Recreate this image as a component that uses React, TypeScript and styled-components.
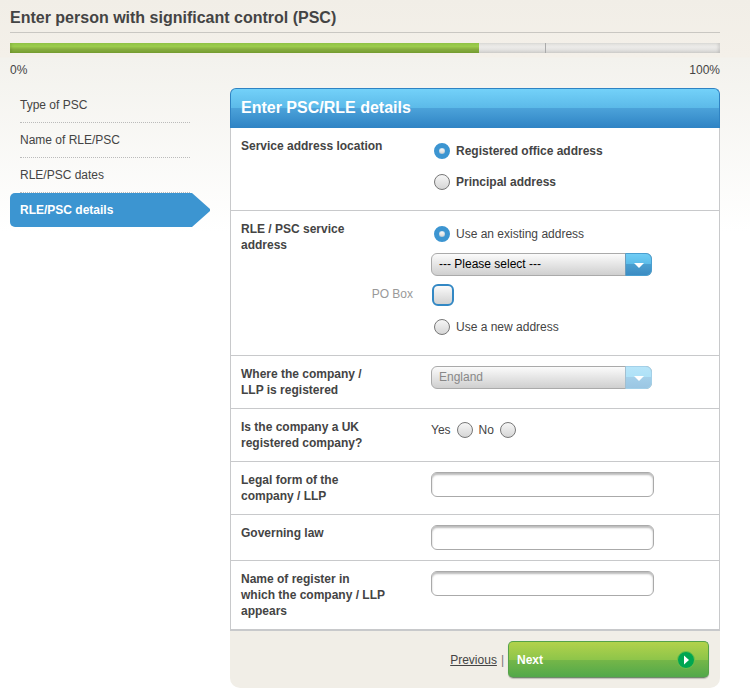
import React, { useState } from 'react';
import styled, { createGlobalStyle, css } from 'styled-components';

const Global = createGlobalStyle`
  *, *::before, *::after { box-sizing: border-box; }
  body {
    margin: 0;
    color: #444;
    font: 12px/16px "Liberation Sans", Arial, sans-serif;
    background: #fff linear-gradient(#f1eee7 0, #f4f0e9 57px, #f3f2ed 58px, #fff 232px) no-repeat;
  }
  ul, h1, h2 { margin: 0; padding: 0; }
  input, select, button { margin: 0; font: inherit; }
`;

const Page = styled.div`
  padding: 8px 30px 3px 10px;
`;

const Title = styled.h1`
  padding-bottom: 4px;
  border-bottom: 1px solid #c9c7c2;
  font-size: 16px;
  line-height: 20px;
`;

const Track = styled.div`
  position: relative;
  height: 10px;
  margin: 10px 0 9px;
  background: linear-gradient(#e3e2df, #ecebe9 40%, #e6e5e3 60%, #d5d4d1);
  box-shadow: inset -2px 0 3px rgba(0, 0, 0, 0.1);
`;

const Fill = styled.div`
  height: 100%;
  background: linear-gradient(#93c647, #9ccb4c 35%, #85ab3e 65%, #77a030);
  box-shadow: inset 2px 0 2px rgba(0, 0, 0, 0.08);
`;

const Marker = styled.span`
  position: absolute;
  top: 0;
  width: 1px;
  height: 100%;
  background: #aaa;
`;

const Scale = styled.div`
  display: flex;
  justify-content: space-between;
  margin-bottom: 10px;
`;

const Columns = styled.div`
  display: grid;
  grid-template-columns: 200px minmax(0, 1fr);
  gap: 20px;
  align-items: start;
`;

const Steps = styled.ul`
  list-style: none;
`;

const StepLink = styled.a<{ $active?: boolean }>`
  display: block;
  color: #444;
  text-decoration: none;
  ${({ $active }) =>
    $active
      ? css`
          padding: 9px 10px;
          border-radius: 5px 0 0 5px;
          color: #fff;
          font-weight: bold;
          background: #3c95d1;
          clip-path: polygon(0 0, 182px 0, 200px 16px, 200px 18px, 182px 100%, 0 100%);
        `
      : css`
          margin: 0 20px 0 10px;
          padding: 9px 0;
          border-bottom: 1px dotted #bbb;
        `}
`;

const PanelHeader = styled.h2`
  padding: 9px 10px 10px;
  border: 1px solid #2f83c3;
  border-bottom: 0;
  border-radius: 6px 6px 0 0;
  color: #fff;
  font-size: 16px;
  line-height: 20px;
  background: linear-gradient(#73d1f9, #5bb9e8 50%, #4ba2d9 50%, #2f83c4);
`;

const Panel = styled.div`
  border: 1px solid #c8c9cb;
  border-top: 0;
  background: #fff;
`;

const Row = styled.div<{ $roomy?: boolean }>`
  display: grid;
  grid-template-columns: 190px minmax(0, 1fr);
  align-items: start;
  padding: 10px 10px ${({ $roomy }) => ($roomy ? 15 : 10)}px;
  border-bottom: 1px solid #c8c9cb;
`;

const Caption = styled.label`
  max-width: 146px;
  font-weight: bold;
`;

const Stack = styled.div<{ $gap: number }>`
  display: grid;
  gap: ${({ $gap }) => $gap}px;
`;

const Choice = styled.label<{ $bold?: boolean }>`
  display: flex;
  align-items: center;
  gap: 6px;
  height: 26px;
  padding-left: 3px;
  font-weight: ${({ $bold }) => ($bold ? 'bold' : 'normal')};
`;

const Radio = styled.input.attrs({ type: 'radio' })`
  appearance: none;
  flex: none;
  width: 16px;
  height: 16px;
  border: 1px solid #777;
  border-radius: 50%;
  background: linear-gradient(#f6f6f6, #d6d6d6);
  &:checked {
    border: 5px solid #3c95d1;
    background: linear-gradient(#fff, #d3d3d3) padding-box;
    box-shadow: inset 0 0 1px #2f80bd;
  }
`;

const InlineChoices = styled.div`
  display: flex;
  gap: 6px;
  height: 22px;
`;

const InlineChoice = styled.label`
  display: flex;
  align-items: center;
  gap: 6px;
`;

const SelectBox = styled.div`
  position: relative;
  width: 100%;
  max-width: 221px;
  height: 23px;
`;

const Select = styled.select`
  appearance: none;
  display: block;
  width: 100%;
  height: 23px;
  padding: 0 34px 1px 7px;
  border: 1px solid #aaa;
  border-radius: 6px;
  color: #000;
  background: linear-gradient(#fbfbfb, #cfcfcf);
  &:disabled {
    color: #888;
    opacity: 1;
  }
`;

const SelectArrow = styled.span<{ $muted?: boolean }>`
  position: absolute;
  top: 0;
  right: 0;
  display: flex;
  align-items: center;
  justify-content: center;
  width: 27px;
  height: 23px;
  padding-top: 2px;
  border: 1px solid ${({ $muted }) => ($muted ? '#a3d0e8' : '#4a9fd0')};
  border-left-color: ${({ $muted }) => ($muted ? '#a2bfd0' : '#6b9dbd')};
  border-radius: 0 6px 6px 0;
  background: ${({ $muted }) =>
    $muted
      ? 'linear-gradient(#b7e5f9, #ade1f7 50%, #a3cfe9 50%, #9bc6e3)'
      : 'linear-gradient(#70cdf5, #5bbbe8 50%, #4b9fd0 50%, #3c8cc3)'};
  pointer-events: none;
`;

const PoBoxLabel = styled.label`
  justify-self: end;
  margin: 10px 18px 0 0;
  color: #999;
`;

const CheckBox = styled.input.attrs({ type: 'checkbox' })`
  appearance: none;
  width: 22px;
  height: 22px;
  margin: 8px 0 8px 1px;
  border: 2px solid #3388c4;
  border-radius: 6px;
  background: linear-gradient(#fafafa, #d2d2d2);
  &:checked {
    background: #3c95d1;
  }
`;

const SecondColumn = styled.div`
  grid-column: 2;
`;

const TextBox = styled.input.attrs({ type: 'text' })`
  width: 100%;
  max-width: 223px;
  height: 25px;
  padding: 0 7px;
  border: 1px solid #aaa;
  border-radius: 6px;
  background: #fff;
  box-shadow: inset 0 2px 2px #bbb;
`;

const Footer = styled.div`
  display: flex;
  align-items: center;
  justify-content: flex-end;
  gap: 4px;
  padding: 10px 11px;
  border-radius: 0 0 10px 10px;
  background: #f1eee7;
`;

const PreviousLink = styled.a`
  color: #444;
`;

const Pipe = styled.span`
  color: #777;
`;

const NextButton = styled.button`
  display: flex;
  align-items: center;
  justify-content: space-between;
  width: 201px;
  height: 37px;
  padding: 0 13px 0 8px;
  border: 1px solid #55a249;
  border-bottom-color: #6f8a6b;
  border-radius: 5px;
  color: #fff;
  font-weight: bold;
  background: linear-gradient(#b2d24b, #8ec54a 50%, #76b748 50%, #52a84a);
  box-shadow: 0 1px 1px rgba(0, 0, 0, 0.2);
`;

const steps = ['Type of PSC', 'Name of RLE/PSC', 'RLE/PSC dates', 'RLE/PSC details'];
const currentStep = 3;
const progress = 66;
const milestone = 75.4;

interface DropDownProps {
  id: string;
  option: string;
  disabled?: boolean;
  label?: string;
}

function DropDown({ id, option, disabled, label }: DropDownProps) {
  return (
    <SelectBox>
      <Select id={id} disabled={disabled} aria-label={label}>
        <option>{option}</option>
      </Select>
      <SelectArrow $muted={disabled}>
        <svg width="10" height="5" viewBox="0 0 10 5" aria-hidden="true">
          <path d="M0 0h10L5 5z" fill="#fff" />
        </svg>
      </SelectArrow>
    </SelectBox>
  );
}

export default function App() {
  const [location, setLocation] = useState('registered');
  const [source, setSource] = useState('existing');

  return (
    <Page>
      <Global />
      <Title>Enter person with significant control (PSC)</Title>
      <Track role="progressbar" aria-valuenow={progress} aria-label="Progress">
        <Fill style={{ width: `${progress}%` }} />
        <Marker style={{ left: `${milestone}%` }} />
      </Track>
      <Scale>
        <span>0%</span>
        <span>100%</span>
      </Scale>
      <Columns>
        <nav>
          <Steps>
            {steps.map((step, i) => (
              <li key={step}>
                <StepLink href="#" $active={i === currentStep}>{step}</StepLink>
              </li>
            ))}
          </Steps>
        </nav>
        <form onSubmit={(e) => e.preventDefault()}>
          <PanelHeader>Enter PSC/RLE details</PanelHeader>
          <Panel>
            <Row $roomy role="radiogroup" aria-labelledby="location-caption">
              <Caption as="span" id="location-caption">Service address location</Caption>
              <Stack $gap={5}>
                <Choice $bold>
                  <Radio name="location" checked={location === 'registered'} onChange={() => setLocation('registered')} />
                  Registered office address
                </Choice>
                <Choice $bold>
                  <Radio name="location" checked={location === 'principal'} onChange={() => setLocation('principal')} />
                  Principal address
                </Choice>
              </Stack>
            </Row>
            <Row $roomy role="radiogroup" aria-labelledby="source-caption">
              <Caption as="span" id="source-caption">RLE / PSC service address</Caption>
              <Stack $gap={6}>
                <Choice>
                  <Radio name="source" checked={source === 'existing'} onChange={() => setSource('existing')} />
                  Use an existing address
                </Choice>
                <DropDown id="existing" option="--- Please select ---" label="Existing address" />
              </Stack>
              <PoBoxLabel htmlFor="po-box">PO Box</PoBoxLabel>
              <CheckBox id="po-box" />
              <SecondColumn>
                <Choice>
                  <Radio name="source" checked={source === 'new'} onChange={() => setSource('new')} />
                  Use a new address
                </Choice>
              </SecondColumn>
            </Row>
            <Row>
              <Caption htmlFor="country">Where the company / LLP is registered</Caption>
              <DropDown id="country" option="England" disabled />
            </Row>
            <Row role="radiogroup" aria-labelledby="uk-caption">
              <Caption as="span" id="uk-caption">Is the company a UK registered company?</Caption>
              <InlineChoices>
                <InlineChoice>Yes <Radio name="uk" /></InlineChoice>
                <InlineChoice>No <Radio name="uk" /></InlineChoice>
              </InlineChoices>
            </Row>
            <Row>
              <Caption htmlFor="legal-form">Legal form of the company / LLP</Caption>
              <TextBox id="legal-form" />
            </Row>
            <Row>
              <Caption htmlFor="law">Governing law</Caption>
              <TextBox id="law" />
            </Row>
            <Row>
              <Caption htmlFor="register">Name of register in which the company / LLP appears</Caption>
              <TextBox id="register" />
            </Row>
          </Panel>
          <Footer>
            <PreviousLink href="#">Previous</PreviousLink>
            <Pipe>|</Pipe>
            <NextButton type="submit">
              Next
              <svg width="18" height="18" viewBox="0 0 18 18" aria-hidden="true">
                <circle cx="9" cy="9" r="8.5" fill="#00a651" stroke="#6fbf4a" />
                <path d="M7 4.5v9L12 9z" fill="#fff" />
              </svg>
            </NextButton>
          </Footer>
        </form>
      </Columns>
    </Page>
  );
}
